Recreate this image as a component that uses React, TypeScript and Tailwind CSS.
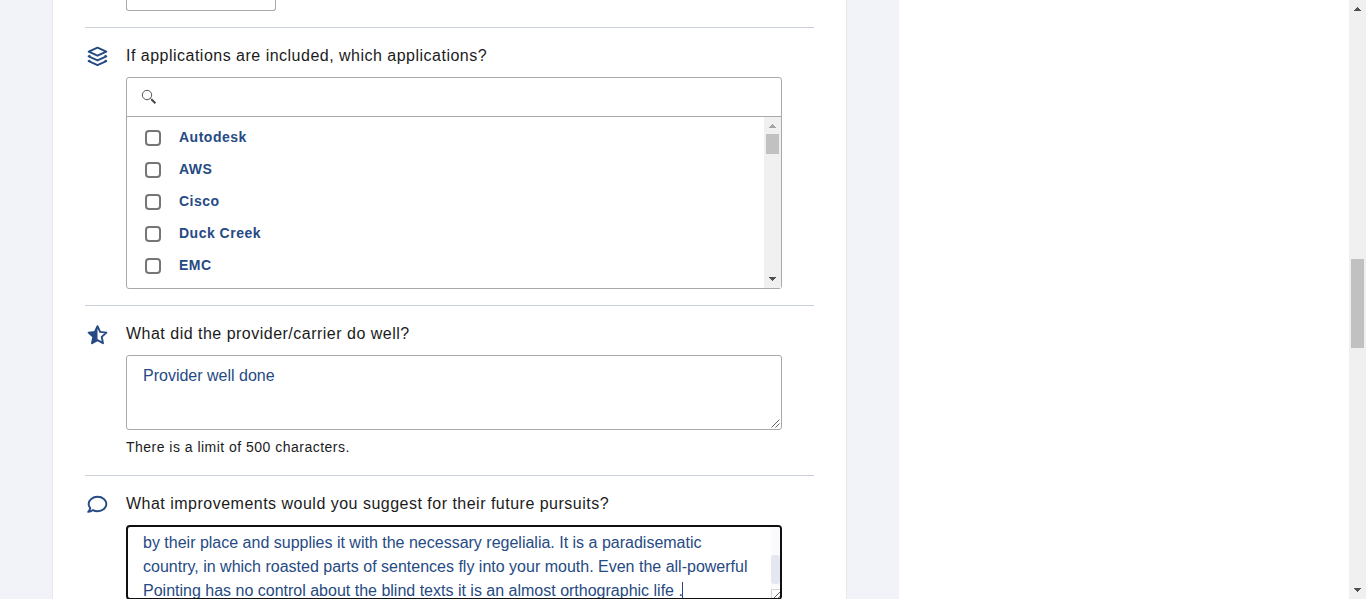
import type { ReactNode } from "react";

const applications = ["Autodesk", "AWS", "Cisco", "Duck Creek", "EMC"];

function Arrow({ down = false, color }: { down?: boolean; color: string }) {
  return (
    <svg width="7" height="4" viewBox="0 0 7 4" shapeRendering="crispEdges" fill={color}>
      {down ? (
        <path d="M0 0h7v1H0zM1 1h5v1H1zM2 2h3v1H2zM3 3h1v1H3z" />
      ) : (
        <path d="M3 0h1v1H3zM2 1h3v1H2zM1 2h5v1H1zM0 3h7v1H0z" />
      )}
    </svg>
  );
}

function Resizer() {
  return (
    <svg width="9" height="9" viewBox="0 0 9 9" fill="none" stroke="#555" strokeWidth="0.9">
      <path d="M0.5 8.5L8.5 0.5M4.5 8.5L8.5 4.5" />
    </svg>
  );
}

function LayersIcon() {
  return (
    <svg width="22" height="22" viewBox="0 0 22 22" fill="none" stroke="#264a83" strokeWidth="2" strokeLinejoin="round" strokeLinecap="round">
      <path d="M11.5 1.7L20.3 5.7L11.5 9.7L2.7 5.7Z" />
      <path d="M3.6 9.9L2.7 10.4L11.5 14.4L20.3 10.4L19.4 9.9" />
      <path d="M3.6 14.7L2.7 15.2L11.5 19.2L20.3 15.2L19.4 14.7" />
    </svg>
  );
}

function StarHalfIcon() {
  return (
    <svg width="22" height="22" viewBox="-0.5 0 22 22">
      <path d="M11 2.2L13.6 7.9L19.9 8.6L15.2 12.9L16.5 19.2L11 16.1L5.5 19.2L6.8 12.9L2.1 8.6L8.4 7.9Z" fill="none" stroke="#264a83" strokeWidth="1.9" strokeLinejoin="round" />
      <path d="M11 1.6V16.4L5.2 19.6L6.6 13L1.6 8.4L8.3 7.7Z" fill="#264a83" />
    </svg>
  );
}

function CommentIcon() {
  return (
    <svg width="22" height="22" viewBox="-0.3 0.5 22 22" fill="none" stroke="#264a83" strokeWidth="1.9" strokeLinejoin="round">
      <path d="M11.3 3.3C16.3 3.3 20.1 6.5 20.1 10.5S16.3 17.7 11.3 17.7C9.6 17.7 8 17.3 6.6 16.6C5.3 17.6 3.6 18.3 1.9 18.4C2.9 17.3 3.7 15.9 3.9 14.5C2.9 13.4 2.3 12 2.3 10.5C2.3 6.5 6.3 3.3 11.3 3.3Z" />
    </svg>
  );
}

function Question({ icon, title, className, children }: { icon: ReactNode; title: string; className: string; children: ReactNode }) {
  return (
    <section className={`flex shrink-0 border-b border-[#c9d0d8] ${className}`}>
      <div className="w-[41px] shrink-0 pt-[18px] pl-px">{icon}</div>
      <div className="w-[656px] pt-4">
        <h2 className="h-[33px] text-base leading-6 tracking-[0.49px] whitespace-nowrap text-[#1b1b1b]">{title}</h2>
        {children}
      </div>
    </section>
  );
}

export default function App() {
  return (
    <div className="flex h-[599px] w-[1366px] overflow-hidden bg-white font-['Liberation_Sans',Arial,sans-serif]">
      <div className="w-[899px] shrink-0 bg-[#f2f3f8] pl-[52px]">
        <main className="flex h-[599px] w-[795px] flex-col overflow-hidden border-x border-[#e8e9ea] bg-white px-8">
          <div className="h-7 shrink-0 border-b border-[#c9d0d8] pl-[41px]">
            <div className="h-[11px] w-[150px] rounded-b-[3px] border border-t-0 border-[#a9a9a9]" />
          </div>

          <Question icon={<LayersIcon />} title="If applications are included, which applications?" className="h-[278px]">
            <div className="flex h-[212px] flex-col rounded-[3px] border border-[#a9a9a9]">
              <div className="flex h-[39px] shrink-0 items-center border-b border-[#a9a9a9] pl-3.5">
                <svg width="16" height="16" viewBox="0 0 16 16" fill="none">
                  <circle cx="6" cy="6" r="4.7" stroke="#555" strokeWidth="1" />
                  <path d="M9.3 9.3L11 11" stroke="#555" strokeWidth="1" />
                  <path d="M10.3 10.3L14.4 14.2" stroke="#444" strokeWidth="2" />
                </svg>
              </div>
              <div className="flex min-h-0 flex-1">
                <ul className="flex-1 pt-1">
                  {applications.map((name) => (
                    <li key={name} className="flex h-8 items-center pl-[18px] text-sm font-bold tracking-[0.5px] text-[#264a83]">
                      <span className="mt-0.5 mr-[18px] size-4 rounded-[4px] border-2 border-[#767676]" />
                      {name}
                    </li>
                  ))}
                </ul>
                <div className="flex w-[17px] flex-col items-center bg-[#f0f0f0] pt-[7px] pb-[7px]">
                  <Arrow color="#a3a3a3" />
                  <div className="mt-1.5 h-5 w-[13px] bg-[#c1c1c1]" />
                  <div className="flex-1" />
                  <Arrow down color="#505050" />
                </div>
              </div>
            </div>
          </Question>

          <Question icon={<StarHalfIcon />} title="What did the provider/carrier do well?" className="h-[170px]">
            <div className="flex h-[75px] items-end rounded-[3px] border border-[#a9a9a9] pl-4">
              <p className="flex-1 self-start pt-2 text-base leading-6 text-[#264a83]">Provider well done</p>
              <span className="p-px"><Resizer /></span>
            </div>
            <p className="pt-1.5 text-sm leading-[22px] tracking-[0.48px] text-[#1b1b1b]">There is a limit of 500 characters.</p>
          </Question>

          <Question icon={<CommentIcon />} title="What improvements would you suggest for their future pursuits?" className="h-[170px]">
            <div className="flex h-[75px] overflow-hidden rounded-[4px] border-2 border-[#101010] pl-[15px]">
              <p className="flex-1 pt-1 text-base leading-6 whitespace-nowrap text-[#264a83]">
                by their place and supplies it with the necessary regelialia. It is a paradisematic
                <br />
                country, in which roasted parts of sentences fly into your mouth. Even the all-powerful
                <br />
                Pointing has no control about the blind texts it is an almost orthographic life .
                <span className="-ml-px inline-block h-[18px] w-px bg-[#264a83] align-[-4px]" />
              </p>
              <div className="flex w-[9px] shrink-0 flex-col bg-[#fafafc]">
                <div className="mt-7 h-[29px] rounded-[3px] bg-[#e4e7ef]" />
                <div className="mt-[5px] h-[9px] border-t border-l border-[#d5d5d5] bg-white pt-px"><Resizer /></div>
              </div>
            </div>
          </Question>
        </main>
      </div>
      <div className="flex-1" />
      <div className="flex w-[17px] flex-col items-center bg-[#f0f0f0] pt-[7px] pb-[7px]">
        <Arrow color="#505050" />
        <div className="mt-[248px] h-[89px] w-[13px] bg-[#c1c1c1]" />
        <div className="flex-1" />
        <Arrow down color="#505050" />
      </div>
    </div>
  );
}
